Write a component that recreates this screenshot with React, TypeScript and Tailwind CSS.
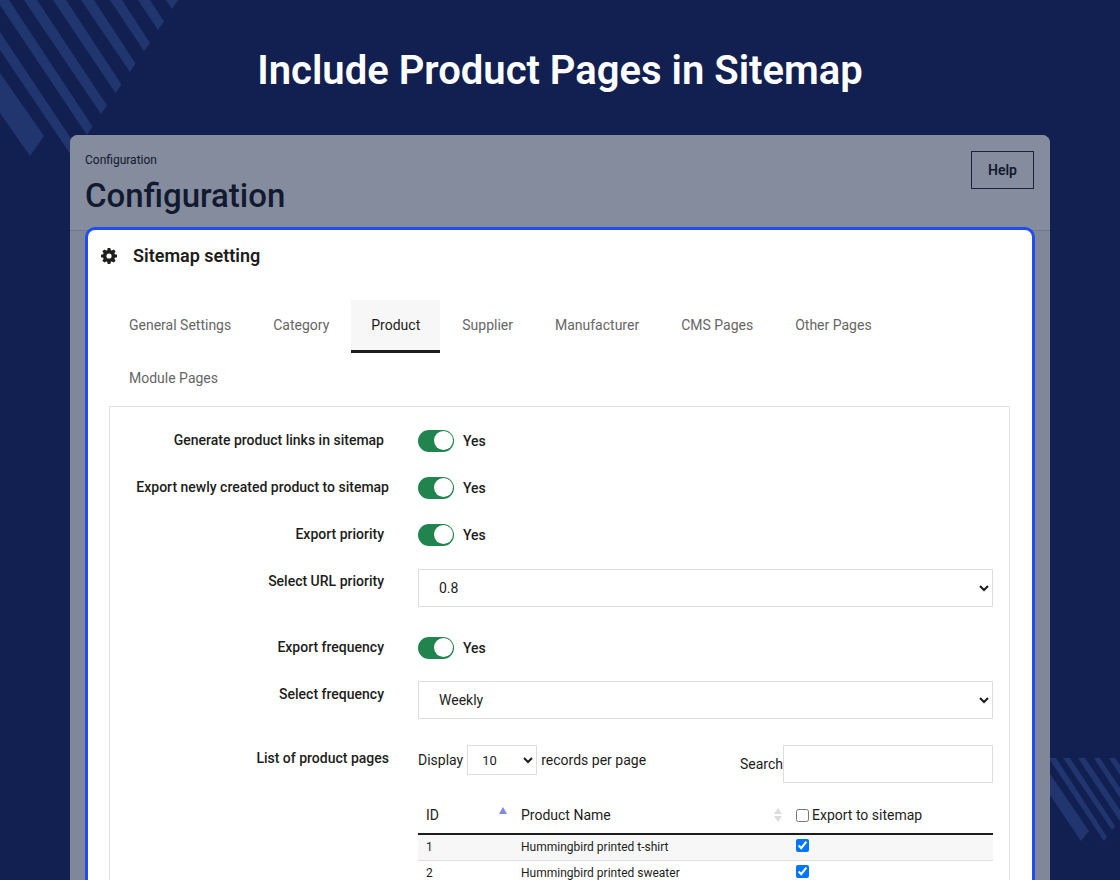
import { useState } from 'react';

const TABS = [
  'General Settings',
  'Category',
  'Product',
  'Supplier',
  'Manufacturer',
  'CMS Pages',
  'Other Pages',
  'Module Pages',
];

const PRODUCTS = [
  { id: 1, name: 'Hummingbird printed t-shirt' },
  { id: 2, name: 'Hummingbird printed sweater' },
];

function Stripes() {
  return (
    <>
      <svg className="absolute top-0 left-0" width="180" height="160" fill="#21366f" aria-hidden="true">
        <path d="M0 73 44 136 30 156 0 113z" />
        <path d="M0 32 78 149 73 158 0 50z" />
        <path d="M0 0H9L92.500 126.500 87 135 0 5z" />
        <path d="M24 0H37L107 105.500 101 114z" />
        <path d="M53 0H66L121.500 84.500 115.500 93z" />
        <path d="M81 0H94L135.500 63.500 130 72z" />
        <path d="M110 0H122L150 43 144 51z" />
        <path d="M138 0H150L164 21.500 158 30z" />
        <path d="M166 0H178L172 9z" />
      </svg>
      <svg className="absolute right-0 bottom-[39px]" width="70" height="83" fill="#21366f" aria-hidden="true">
        <path d="M0 16 39 73 31 83 0 37z" />
        <path d="M0 0H6L57 79 54 83 0 2z" />
        <path d="M13 0H20L65 68 62 72z" />
        <path d="M28 0H35L70 52V63z" />
        <path d="M44 0H50L70 30V40z" />
        <path d="M59 0H65L70 7V17z" />
      </svg>
    </>
  );
}

function Gear() {
  return (
    <svg width="16" height="16" viewBox="0 0 16 16" fill="currentColor" aria-hidden="true">
      <path
        fillRule="evenodd"
        d="M6.700 0h2.600l.5 2.200 1 .4 1.900-1.200 1.900 1.900-1.200 1.900.4 1 2.200.5v2.600l-2.200.5-.4 1 1.200 1.900-1.900 1.900-1.900-1.200-1 .4-.5 2.200H6.700l-.5-2.200-1-.4-1.900 1.200-1.900-1.900 1.200-1.900-.4-1L0 9.300V6.700l2.200-.5.4-1-1.200-1.900 1.900-1.900 1.900 1.200 1-.4zM8 5.400a2.600 2.600 0 1 0 0 5.200 2.600 2.600 0 0 0 0-5.200z"
      />
    </svg>
  );
}

function Row({
  label,
  htmlFor,
  wide,
  children,
}: {
  label: string;
  htmlFor: string;
  wide?: boolean;
  children: React.ReactNode;
}) {
  return (
    <div className="grid grid-cols-[279px_1fr] gap-x-[29px]">
      <label
        htmlFor={htmlFor}
        className={`pt-1 text-right text-sm leading-5 font-medium whitespace-nowrap ${wide ? '' : 'pr-[5px]'}`}>
        {label}
      </label>
      <div>{children}</div>
    </div>
  );
}

function Toggle({ id }: { id: string }) {
  const [on, setOn] = useState(true);
  return (
    <div className="flex h-[27px] items-center gap-[9px] pt-[2px]">
      <input
        id={id}
        type="checkbox"
        role="switch"
        checked={on}
        onChange={() => setOn(!on)}
        className="flex h-[22px] w-9 appearance-none items-center rounded-full bg-gray-400 px-px before:size-[19px] before:rounded-full before:bg-white checked:justify-end checked:bg-[#21834d]"
      />
      <span className="text-sm leading-5 font-medium">{on ? 'Yes' : 'No'}</span>
    </div>
  );
}

export default function App() {
  const [tab, setTab] = useState('Product');
  const [all, setAll] = useState(false);
  const [checked, setChecked] = useState([1, 2]);

  const toggle = (id: number) =>
    setChecked(checked.includes(id) ? checked.filter((c) => c !== id) : [...checked, id]);

  const toggleAll = () => {
    setChecked(all ? [] : PRODUCTS.map((p) => p.id));
    setAll(!all);
  };

  return (
    <div className="relative flex h-screen flex-col overflow-hidden bg-[#112050] font-[Roboto,sans-serif] text-[#1d1d1b]">
      <Stripes />
      <h1 className="pt-[47px] pb-10 text-center text-[40px] leading-12 font-semibold text-white">
        Include Product Pages in Sitemap
      </h1>

      <main className="relative mx-[70px] flex flex-1 flex-col rounded-t-lg bg-[#7f8798]">
        <header className="flex items-start justify-between rounded-t-lg border-b border-[#707788] bg-[#858c9e] px-[15px] pt-4 pb-[14px] text-[#111a2f]">
          <div>
            <p className="pt-px text-xs leading-4">Configuration</p>
            <h2 className="mt-2 text-[33px] leading-10 font-medium">Configuration</h2>
          </div>
          <button type="button" className="mr-px h-[38px] w-[63px] border border-[#1b2338] text-sm font-semibold">
            Help
          </button>
        </header>

        <section className="mx-[15px] -mt-1 flex-1 rounded-t-[10px] border-3 border-b-0 border-[#234bf3] bg-white pr-[22px] pl-[21px]">
          <h3 className="-ml-2 flex items-center gap-4 pt-[14px] text-lg leading-6 font-semibold">
            <Gear />
            Sitemap setting
          </h3>

          <nav className="mt-8 flex flex-wrap gap-x-[2px]">
            {TABS.map((t) => (
              <button
                key={t}
                type="button"
                onClick={() => setTab(t)}
                className={`h-[53px] border-b-3 px-5 text-sm ${
                  t === tab
                    ? 'border-[#1d1d1b] bg-[#f7f7f7] text-[#1d1d1b]'
                    : 'border-transparent text-[#666666]'
                }`}>
                {t}
              </button>
            ))}
          </nav>

          <div className="border border-b-0 border-[#e3e3e3] pt-[19px] pr-4">
            <div className="space-y-5">
              <Row label="Generate product links in sitemap" htmlFor="links">
                <Toggle id="links" />
              </Row>
              <Row label="Export newly created product to sitemap" htmlFor="newly" wide>
                <Toggle id="newly" />
              </Row>
              <Row label="Export priority" htmlFor="priority">
                <Toggle id="priority" />
              </Row>
              <Row label="Select URL priority" htmlFor="url-priority">
                <select
                  id="url-priority"
                  defaultValue="0.8"
                  className="mt-[2px] mb-[6px] block h-[38px] w-full border border-[#dddddd] bg-white pl-4 text-sm">
                  <option>0.8</option>
                  <option>1.0</option>
                </select>
              </Row>
              <Row label="Export frequency" htmlFor="frequency">
                <Toggle id="frequency" />
              </Row>
              <Row label="Select frequency" htmlFor="select-frequency">
                <select
                  id="select-frequency"
                  defaultValue="Weekly"
                  className="mt-px mb-[25px] block h-[38px] w-full border border-[#dddddd] bg-white pl-4 text-sm">
                  <option>Daily</option>
                  <option>Weekly</option>
                </select>
              </Row>
            </div>

            <Row label="List of product pages" htmlFor="search" wide>
              <div className="flex items-start justify-between pt-px text-sm">
                <label className="flex items-center gap-1">
                  Display
                  <select className="h-[30px] w-[70px] border border-[#dddddd] bg-white pl-[10px] text-[13px]">
                    <option>10</option>
                    <option>25</option>
                  </select>
                  records per page
                </label>
                <div className="flex items-center">
                  <label htmlFor="search">Search</label>
                  <input id="search" type="text" className="h-[38px] w-[210px] border border-[#dddddd] px-2" />
                </div>
              </div>

              <table className="mt-[14px] w-full table-fixed text-left">
                <thead className="border-b-2 border-[#1d1d1b] text-sm">
                  <tr className="h-[37px]">
                    <th className="w-[95px] pr-[6px] pl-2 font-normal">
                      <span className="flex items-center justify-between">
                        ID
                        <svg width="8" height="16" fill="#8287df" aria-hidden="true">
                          <path d="M4 0 8 7H0z" />
                        </svg>
                      </span>
                    </th>
                    <th className="pr-[6px] pl-2 font-normal">
                      <span className="flex items-center justify-between">
                        Product Name
                        <svg width="8" height="16" fill="#dcdcdc" aria-hidden="true">
                          <path d="M4 1 8 7H0zM0 9H8L4 15z" />
                        </svg>
                      </span>
                    </th>
                    <th className="w-[205px] px-2 font-normal">
                      <label className="flex items-center gap-[3px]">
                        <input type="checkbox" checked={all} onChange={toggleAll} className="size-[13px]" />
                        Export to sitemap
                      </label>
                    </th>
                  </tr>
                </thead>
                <tbody className="text-xs">
                  {PRODUCTS.map((p) => (
                    <tr key={p.id} className="h-[26px] border-b border-[#dddddd] odd:bg-[#f7f7f7]">
                      <td className="px-2">{p.id}</td>
                      <td className="px-2">{p.name}</td>
                      <td className="px-2 pb-1">
                        <input
                          type="checkbox"
                          aria-label={p.name}
                          checked={checked.includes(p.id)}
                          onChange={() => toggle(p.id)}
                          className="block size-[13px]"
                        />
                      </td>
                    </tr>
                  ))}
                </tbody>
              </table>
            </Row>
          </div>
        </section>
      </main>
    </div>
  );
}
